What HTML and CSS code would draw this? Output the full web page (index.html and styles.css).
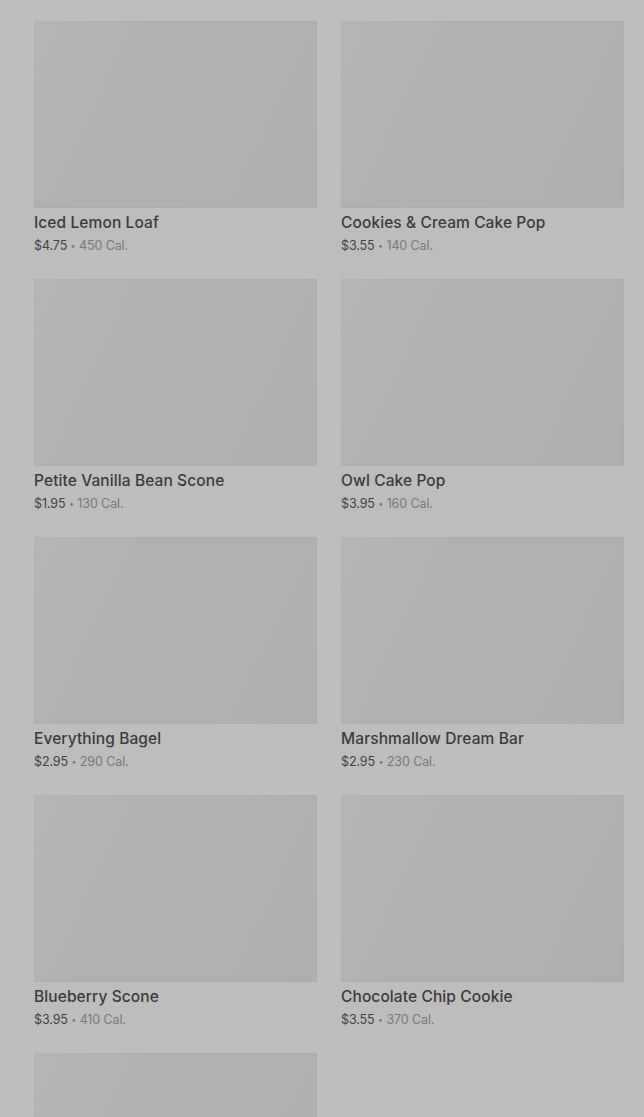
FILE: index.html
```html
<!DOCTYPE html>
<html lang="en">

<head>
  <meta charset="UTF-8">
  <meta name="viewport" content="width=device-width, initial-scale=1.0">
  <title>Bakery</title>
  <link rel="stylesheet" href="styles.css">
</head>

<body>
  <div class="menu-grid">

    <div class="product">
      <div class="product-image"></div>
      <h3 class="product-name">Iced Lemon Loaf</h3>
      <p class="product-info"><span class="price">$4.75</span> <span class="dot">&bull;</span> 450 Cal.</p>
    </div>
    <div class="product">
      <div class="product-image"></div>
      <h3 class="product-name">Cookies &amp; Cream Cake Pop</h3>
      <p class="product-info"><span class="price">$3.55</span> <span class="dot">&bull;</span> 140 Cal.</p>
    </div>

    <div class="product">
      <div class="product-image"></div>
      <h3 class="product-name">Petite Vanilla Bean Scone</h3>
      <p class="product-info"><span class="price">$1.95</span> <span class="dot">&bull;</span> 130 Cal.</p>
    </div>
    <div class="product">
      <div class="product-image"></div>
      <h3 class="product-name">Owl Cake Pop</h3>
      <p class="product-info"><span class="price">$3.95</span> <span class="dot">&bull;</span> 160 Cal.</p>
    </div>

    <div class="product">
      <div class="product-image"></div>
      <h3 class="product-name">Everything Bagel</h3>
      <p class="product-info"><span class="price">$2.95</span> <span class="dot">&bull;</span> 290 Cal.</p>
    </div>
    <div class="product">
      <div class="product-image"></div>
      <h3 class="product-name">Marshmallow Dream Bar</h3>
      <p class="product-info"><span class="price">$2.95</span> <span class="dot">&bull;</span> 230 Cal.</p>
    </div>

    <div class="product">
      <div class="product-image"></div>
      <h3 class="product-name">Blueberry Scone</h3>
      <p class="product-info"><span class="price">$3.95</span> <span class="dot">&bull;</span> 410 Cal.</p>
    </div>
    <div class="product">
      <div class="product-image"></div>
      <h3 class="product-name">Chocolate Chip Cookie</h3>
      <p class="product-info"><span class="price">$3.55</span> <span class="dot">&bull;</span> 370 Cal.</p>
    </div>

    <div class="product">
      <div class="product-image"></div>
    </div>

  </div>
</body>

</html>
```

FILE: styles.css
```css
* {
  margin: 0px;
  padding: 0px;
  box-sizing: border-box;
}

body {
  background: #bdbdbd;
  font-family: Inter, Roboto, 'Liberation Sans', sans-serif;
  overflow: hidden;
}

.menu-grid {
  display: grid;
  grid-template-columns: 283px 283px;
  column-gap: 24px;
  row-gap: 26px;
  padding: 21px 20px 0 34px;
}

.product {
  height: 232px;
}

.product-image {
  height: 187px;
  width: 100%;
  background: linear-gradient(115deg, #b5b5b5 0%, #b1b1b1 30%, #afafaf 100%);
  box-shadow: inset 0 0 0 1px rgba(0, 0, 0, 0.012);
}

.product-name {
  margin-top: 5px;
  font-size: 15.5px;
  line-height: 20px;
  font-weight: 500;
  color: #3b3b3b;
  letter-spacing: 0.1px;
}

.product-info {
  margin-top: 4px;
  font-size: 12.5px;
  line-height: 18px;
  color: #7a7a7a;
  letter-spacing: -0.1px;
}

.price {
  color: #424242;
}

.dot {
  font-size: 9px;
  vertical-align: 1px;
}
```
